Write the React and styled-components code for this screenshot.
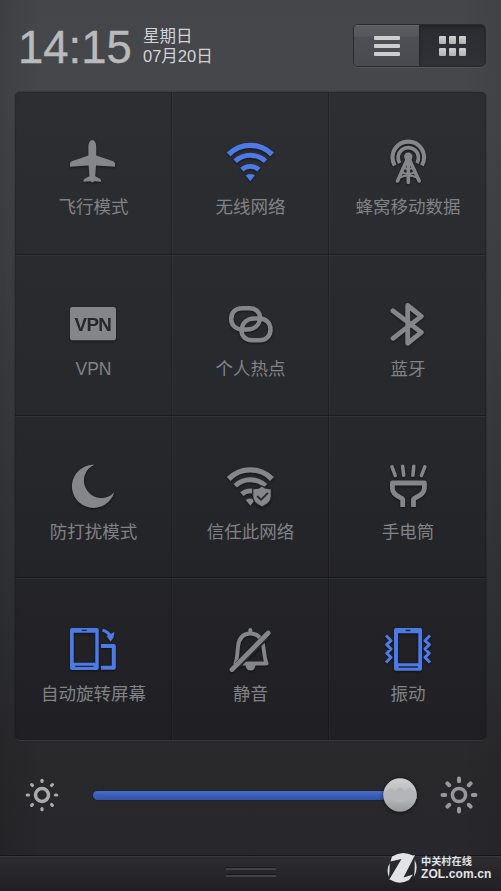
import React from "react";
import styled, { createGlobalStyle } from "styled-components";

const GREY = "#85868a";
const BLUE = "#4d7ae6";
const DARK = "#26272b";

const GlobalStyle = createGlobalStyle`
  html, body { margin: 0; padding: 0; background: #2a2a2d; }
  *, *::before, *::after { box-sizing: border-box; }
`;

const Screen = styled.main`
  position: relative;
  display: flex;
  flex-direction: column;
  width: 501px;
  height: 891px;
  overflow: hidden;
  font-family: "Liberation Sans", "Noto Sans CJK SC", sans-serif;
  background:
    linear-gradient(90deg, rgba(0, 0, 0, 0.1), transparent 8%, transparent 92%, rgba(0, 0, 0, 0.06)),
    linear-gradient(#454649 0, #46474b 90px, #3d3e42 350px, #303135 620px, #29292c 760px, #27272b 891px);
`;

const Header = styled.header`
  display: flex;
  height: 92px;
  padding: 24px 15px 0 18px;
`;

const Clock = styled.time`
  width: 124px;
  margin-top: -2px;
  font-size: 45.500px;
  line-height: 52px;
  color: #b9babd;
  -webkit-text-stroke: 0.4px #b9babd;
`;

const DateBlock = styled.div`
  flex: 1;
  margin: 3px 0 0 1px;
  font-size: 16.500px;
  line-height: 19.500px;
  color: #d2d3d6;
`;

const ViewSwitch = styled.div`
  display: flex;
  width: 133px;
  height: 43px;
  border: 1px solid #2a2b2f;
  border-radius: 5px;
  overflow: hidden;
  box-shadow: 0 1px 0 rgba(255, 255, 255, 0.07);
`;

const ViewButton = styled.button`
  flex: 1;
  display: flex;
  align-items: center;
  justify-content: center;
  padding: 0;
  border: 0;
  border-left: ${(p) => (p.$active ? "1px solid #25262a" : "0")};
  background: ${(p) =>
    p.$active
      ? "linear-gradient(#2b2c31, #303136)"
      : "linear-gradient(#5b5c60 0, #57585c 11px, #4e4f54 12px, #4a4b50 100%)"};
  box-shadow: ${(p) => (p.$active ? "inset 0 2px 3px rgba(0,0,0,.2)" : "inset 0 1px 0 #66676b")};
`;

const Bars = styled.span`
  display: grid;
  gap: 4px;
  width: 26px;
  & > i { height: 4px; border-radius: 1px; background: #cdced0; }
`;

const Tiles = styled.span`
  display: grid;
  grid-template-columns: repeat(3, 7px);
  gap: 4px 3px;
  & > i { height: 8px; border-radius: 1px; background: linear-gradient(#d0d1d2, #b0b1b4); }
`;

const Panel = styled.section`
  display: grid;
  grid-template-columns: 157px 157px 157px;
  grid-template-rows: 163px 161px 162px 162px;
  width: 471px;
  height: 648px;
  margin-left: 15px;
  border-radius: 5px;
  background: linear-gradient(#2d2e32, #28292d 45%, #202024);
  box-shadow: 0 1px 0 rgba(255, 255, 255, 0.09), 0 0 2px rgba(0, 0, 0, 0.45), inset 0 0 2px rgba(0, 0, 0, 0.4);
`;

const Tile = styled.button`
  display: flex;
  flex-direction: column;
  align-items: center;
  padding: ${(p) => p.$top}px 0 0;
  border: 0;
  background: none;
  font: inherit;
  box-shadow:
    ${(p) => (p.$edge ? "0 0 0 transparent" : "inset -1px 0 0 rgba(0,0,0,.22), 1px 0 0 rgba(255,255,255,.035)")},
    ${(p) => (p.$last ? "0 0 0 transparent" : "inset 0 -1px 0 rgba(0,0,0,.3), 0 1px 0 rgba(255,255,255,.045)")};
`;

const Icon = styled.svg`
  display: block;
  flex: none;
  width: 60px;
  height: 50px;
  margin-left: -1px;
  color: ${(p) => (p.$on ? BLUE : GREY)};
  filter: drop-shadow(0 1px 1px rgba(0, 0, 0, 0.5));
  overflow: visible;
`;

const Label = styled.span`
  height: 26px;
  margin-top: ${(p) => p.$gap}px;
  padding-left: ${(p) => (p.$edge ? 1 : 0)}px;
  font-size: 17.500px;
  line-height: 26px;
  white-space: nowrap;
  color: #818286;
`;

const Brightness = styled.div`
  display: flex;
  align-items: center;
  height: 115px;
  padding: 0 22px 5px 22px;
`;

const Sun = styled.svg`
  flex: none;
  width: 40px;
  height: 40px;
  color: ${(p) => (p.$bright ? "#97989b" : "#aaabad")};
`;

const Track = styled.div`
  flex: 1;
  display: flex;
  align-items: center;
  height: 34px;
  margin-left: 31px;
`;

const Fill = styled.div`
  width: 307px;
  height: 9px;
  border-radius: 5px;
  background: linear-gradient(#4c6fc4, #3d5fb9 45%, #3352a6);
  box-shadow: 0 0 0 1px #1d2330;
`;

const Thumb = styled.svg`
  flex: none;
  width: 34px;
  height: 34px;
  margin-left: -17px;
  filter: drop-shadow(0 1px 2px rgba(0, 0, 0, 0.6));
`;

const Drawer = styled.footer`
  display: flex;
  flex-direction: column;
  align-items: center;
  gap: 5px;
  height: 36px;
  padding-top: 12px;
  border-top: 1px solid #151518;
  background: linear-gradient(#2d2d31, #202024);
  box-shadow: inset 0 1px 0 #36373a;
`;

const Grip = styled.i`
  width: 50px;
  height: 2px;
  background: #414245;
  box-shadow: 0 -1px 0 #19191b;
`;

const Watermark = styled.div`
  position: absolute;
  left: 387px;
  top: 852px;
  display: flex;
  align-items: center;
  gap: 4px;
  color: #e2e3e4;
`;

const MarkLogo = styled.svg`
  width: 30px;
  height: 32px;
`;

const MarkText = styled.div`
  font-weight: 700;
  white-space: nowrap;
`;

const MarkName = styled.div`
  font-size: 10.200px;
  line-height: 12px;
`;

const MarkSite = styled.div`
  font-size: 12px;
  line-height: 12px;
  letter-spacing: 0.1px;
`;

const line = { fill: "none", stroke: "currentColor", strokeLinecap: "round", strokeLinejoin: "round" };

const Plane = () => (
  <path
    fill="currentColor"
    d="M29.300 4c-2.300 0-3.900 3-3.900 6.500v9L8.800 25.300Q7 26 7 27.500v3.200l18.600-1.200.8 10.700-4.800 2.600q-1.300.8-1.300 3l7-.6 2 1.300 2-1.300 7 .6q0-2.200-1.300-3l-4.800-2.600.8-10.700L52 30.700v-3.200q0-1.500-1.800-2.200L33.200 19.500v-9C33.200 7 31.600 4 29.300 4z"
  />
);

const Waves = () => (
  <>
    <g fill="none" stroke="currentColor">
      <path strokeWidth="5.400" d="M8.700 18.500A30.300 30.300 0 0 1 52 18.500" />
      <path strokeWidth="5" d="M15.200 25.300A22 22 0 0 1 45.500 25.300" />
      <path strokeWidth="4.900" d="M21.800 33.600A12.800 12.800 0 0 1 38.900 33.600" />
    </g>
    <path fill="currentColor" d="M25.700 39.500Q30.300 36.700 34.900 39.500L30.300 45.200z" />
  </>
);

const Tower = () => (
  <g {...line}>
    <g strokeLinecap="butt">
      <path strokeWidth="4.100" d="M17.700 29.500A15.800 15.800 0 1 1 44.900 29.500" />
      <path strokeWidth="3.700" d="M22.600 27.100A10.200 10.200 0 1 1 40 27.100" />
    </g>
    <circle cx="31.300" cy="20.800" r="4.200" fill="currentColor" stroke="none" />
    <path strokeWidth="3.600" d="M30 24L20.500 45M32.600 24L42.200 45M31.300 22V46.500" />
    <path strokeWidth="2.100" d="M27 32Q31.300 34 35.600 32M25 36.500Q31.300 39 37.600 36.500M22.500 41.500Q31.300 37.500 40.100 41.500" />
  </g>
);

const Vpn = () => (
  <>
    <rect x="7" y="8" width="46" height="33.300" rx="2.600" fill="currentColor" />
    <text x="30.200" y="31.500" textAnchor="middle" fontSize="18.800" fontWeight="700" fill={DARK} textLength="37.500">
      VPN
    </text>
  </>
);

const Rings = () => (
  <g fill="none" stroke="currentColor" strokeWidth="4.500">
    <path d="M22 9.200H29.500C36 9.200 40.300 13.500 40 19C39.500 26 34.500 30.500 27 30.500H22.500C15.500 30.500 11.200 26 11.200 20C11.200 13.500 15.500 9.200 22 9.200Z" />
    <path d="M34.500 19.400H39.500C46.500 19.400 50.500 24.500 50.500 30.500C50.500 37 46 41.200 39.500 41.200H32C25.500 41.200 21.400 37 21.600 31.300C22 24 27 19.400 34.500 19.400Z" />
  </g>
);

const Bluetooth = () => (
  <path {...line} strokeWidth="4.800" d="M16 11.800L44.300 33.300L30.700 44.300V6.500L44.300 17.300L16 39.300" />
);

const Moon = () => <path fill="currentColor" d="M31.300 3.700A21.600 21.600 0 1 0 51.300 31.200A17.400 17.400 0 1 1 31.300 3.700z" />;

const Trusted = () => (
  <g transform="translate(0 -.5)">
    <Waves />
    <path
      fill="currentColor"
      stroke={DARK}
      strokeWidth="2.500"
      paintOrder="stroke"
      d="M42 26.300Q38.500 29.300 33.300 28.800V36Q33.800 42.500 42 45.800Q50.200 42.500 50.700 36V28.800Q45.500 29.300 42 26.300z"
    />
    <path fill="none" stroke={DARK} strokeWidth="1.800" d="M37.200 35.500L41 39.300L48 32.300" />
  </g>
);

const Torch = () => (
  <g {...line}>
    <path strokeWidth="3.500" d="M15 5.800L18.200 14.500M25.600 5.200L26.700 14.300M36.800 5.200L35.900 14.300M47.800 5.800L44.500 14.500" />
    <path
      strokeWidth="4.800"
      strokeLinecap="butt"
      d="M25.700 46V38.300Q25.200 37.300 22.700 36.200Q15.800 33 15.400 27.500V22H47.400V27.500Q46.800 33 39.500 36.200Q37 37.300 36.500 38.300V46"
    />
  </g>
);

const Rotate = () => (
  <>
    <path
      fill="currentColor"
      fillRule="evenodd"
      d="M9 4H33.700Q35.700 4 35.700 6V44Q35.700 46 33.700 46H9Q7 46 7 44V6Q7 4 9 4zM10.700 8.700V38.700H32.300V8.700z"
    />
    <path stroke={DARK} strokeWidth="1.300" d="M18.700 6.400H23.700M12.200 42.300H30.500" />
    <path fill="none" stroke="currentColor" strokeWidth="4" strokeLinejoin="round" d="M38 22H50.800V43.800H38" />
    <path fill="none" stroke="currentColor" strokeWidth="3" d="M39.500 6.300Q45 7.500 48 13" />
    <path fill="currentColor" d="M43.500 12L51.500 8L50.500 13.500L47.700 17.700z" />
  </>
);

const Muted = () => (
  <g {...line}>
    <path strokeWidth="3.900" d="M15.500 39.500Q16.800 36 17.200 31L18 22.500Q19.500 9.500 30.300 9.500Q41.300 9.500 43.300 22.500L44.500 31Q45.200 36 46.500 39.500Z" />
    <path strokeWidth="4" d="M30.300 6V8" />
    <path fill="currentColor" stroke="none" d="M25.500 41H35.500Q35 46.500 30.500 46.500Q26 46.500 25.500 41z" />
    <path stroke={DARK} strokeWidth="7.200" strokeLinecap="butt" d="M17.500 41.200L46.500 11.900" />
    <path strokeWidth="4.800" d="M12 45.600L48.200 9" />
  </g>
);

const Vibrate = () => (
  <>
    <path
      fill="currentColor"
      fillRule="evenodd"
      d="M19 4H43Q45 4 45 6V44.700Q45 46.700 43 46.700H19Q17 46.700 17 44.700V6Q17 4 19 4zM21 9.300V39.300H41.300V9.300z"
    />
    <path stroke={DARK} strokeWidth="1.500" d="M28.700 6.600H33.300M21.500 43H41" />
    <path
      {...line}
      strokeLinecap="butt"
      strokeWidth="3"
      d="M9 11.500L14 16.700L9.700 20.700L14 25L9.700 29.200L14 33.400L9 38.500M53 11.500L48 16.700L52.300 20.700L48 25L52.300 29.200L48 33.400L53 38.500"
    />
  </>
);

const rows = [
  { top: 44, gap: 8, items: [["飞行模式", Plane], ["无线网络", Waves, true], ["蜂窝移动数据", Tower]] },
  { top: 44, gap: 7, items: [["VPN", Vpn], ["个人热点", Rings], ["蓝牙", Bluetooth]] },
  { top: 45, gap: 8, items: [["防打扰模式", Moon], ["信任此网络", Trusted], ["手电筒", Torch]] },
  { top: 46, gap: 7, items: [["自动旋转屏幕", Rotate, true], ["静音", Muted], ["振动", Vibrate, true]] },
];

const angles = [0, 45, 90, 135, 180, 225, 270, 315];

function SunIcon({ bright }) {
  return (
    <Sun $bright={bright} viewBox="-20 -20 40 40" {...line}>
      <circle r={bright ? 6.6 : 6.5} strokeWidth="3.500" />
      {angles.map((a) => (
        <path
          key={a}
          transform={`rotate(${a})`}
          strokeWidth={bright ? 4 : 3.2}
          d={bright ? "M0 -13.800V-16.500" : "M0 -13.500V-14.700"}
        />
      ))}
    </Sun>
  );
}

export default function App() {
  return (
    <>
      <GlobalStyle />
      <Screen>
        <Header>
          <Clock>14:15</Clock>
          <DateBlock>
            <div>星期日</div>
            <div>07月20日</div>
          </DateBlock>
          <ViewSwitch>
            <ViewButton aria-label="list">
              <Bars><i /><i /><i /></Bars>
            </ViewButton>
            <ViewButton $active aria-label="grid">
              <Tiles><i /><i /><i /><i /><i /><i /></Tiles>
            </ViewButton>
          </ViewSwitch>
        </Header>
        <Panel>
          {rows.map((row, r) =>
            row.items.map(([name, Glyph, on], c) => (
              <Tile key={name} $top={row.top} $edge={c === 2} $last={r === 3}>
                <Icon $on={on} viewBox="0 0 60 50">
                  <Glyph />
                </Icon>
                <Label $gap={row.gap} $edge={c === 2}>{name}</Label>
              </Tile>
            ))
          )}
        </Panel>
        <Brightness>
          <SunIcon />
          <Track>
            <Fill />
            <Thumb viewBox="-17 -17 34 34">
              <defs>
                <linearGradient id="knob" x2="0" y2="1">
                  <stop offset="0" stopColor="#cecfd0" />
                  <stop offset=".6" stopColor="#b5b6b8" />
                  <stop offset="1" stopColor="#98999b" />
                </linearGradient>
              </defs>
              <circle r="16.700" fill="url(#knob)" />
              <path fill="#b4b5b8" d="M-16.500-2L-9-7L-5-4.500L0-8L5-4.500L9-7L16.500-2V4H9L0 8L-9 4H-16z" />
            </Thumb>
          </Track>
          <SunIcon bright />
        </Brightness>
        <Drawer>
          <Grip />
          <Grip />
        </Drawer>
        <Watermark>
          <MarkLogo viewBox="0 0 30 32">
            <path
              fill="currentColor"
              d="M5 4.500Q15-2 26 3.500L28 3L16.500 25.500L26 22.500L22 28Q12 33.500 3 27.500L2 28L14.500 7L3.500 9.500zM2.700 11Q-1.200 18 2 25Q2.800 18 2.700 11zM27.500 7.500Q32 16 27 25Q28.200 16 27.500 7.500z"
            />
          </MarkLogo>
          <MarkText>
            <MarkName>中关村在线</MarkName>
            <MarkSite>ZOL.com.cn</MarkSite>
          </MarkText>
        </Watermark>
      </Screen>
    </>
  );
}
